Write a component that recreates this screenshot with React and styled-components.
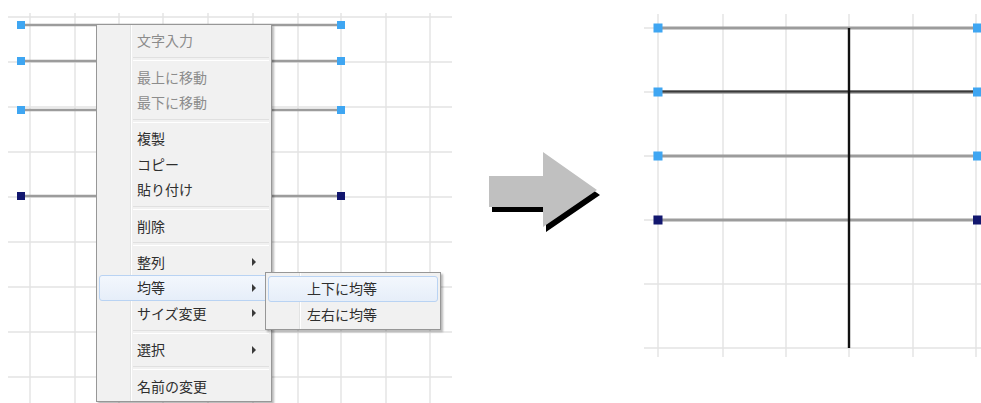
import React from "react";
import styled, { createGlobalStyle } from "styled-components";

const Global = createGlobalStyle`
  html, body { margin: 0; padding: 0; background: #ffffff; }
  body { font-family: "Noto Sans CJK JP", "Noto Sans", sans-serif; }
  * { box-sizing: border-box; }
`;

const Page = styled.div`
  width: 981px;
  height: 403px;
  display: flex;
  overflow: hidden;
  background: #ffffff;
`;

const LeftPane = styled.div`
  position: relative;
  width: 460px;
  height: 403px;
  flex: none;
`;

const MiddlePane = styled.div`
  width: 170px;
  height: 403px;
  flex: none;
`;

const RightPane = styled.div`
  flex: 1;
  height: 403px;
`;

const Canvas = styled.svg`
  display: block;
  width: 100%;
  height: 100%;
`;

const Menu = styled.div`
  position: absolute;
  left: ${(p) => p.$left}px;
  top: ${(p) => p.$top}px;
  width: 176px;
  padding: 3px 2px 2px;
  border: 1px solid #979797;
  background:
    linear-gradient(to right, transparent 33px, #e2e3e3 33px, #e2e3e3 34px, #ffffff 34px, #ffffff 35px, transparent 35px),
    #f1f1f1;
  box-shadow: 2px 2px 2px rgba(0, 0, 0, 0.28);
  display: flex;
  flex-direction: column;
`;

const Item = styled.div`
  position: relative;
  height: 25.5px;
  display: flex;
  align-items: center;
  justify-content: space-between;
  padding: 0 12px 0 ${(p) => p.$indent}px;
  font-size: 14px;
  line-height: 1;
  color: ${(p) => (p.$disabled ? "#8c8c8c" : "#2e2e2e")};
  border: 1px solid ${(p) => (p.$active ? "#b9d3f3" : "transparent")};
  border-radius: 3px;
  background: ${(p) =>
    p.$active ? "linear-gradient(#f3f7fd, #e6eef9)" : "transparent"};
`;

const Label = styled.span`
  display: block;
  margin-top: -1px;
`;

const SubArrow = styled.span`
  width: 0;
  height: 0;
  border-left: 4px solid #3a3a3a;
  border-top: 4px solid transparent;
  border-bottom: 4px solid transparent;
`;

const Separator = styled.div`
  height: 10.8px;
  display: flex;
  align-items: center;
  padding-left: 34px;
  &::after {
    content: "";
    display: block;
    width: 100%;
    height: 2px;
    border-top: 1px solid #e0e0e0;
    border-bottom: 1px solid #ffffff;
  }
`;

const leftV = [30, 75, 119, 163, 208, 253, 298, 341, 386, 430];
const leftH = [17, 62, 107, 152, 197, 242, 287, 332, 377];
const leftLines = [
  { y: 25, c: "#3fa6f2" },
  { y: 61, c: "#3fa6f2" },
  { y: 110, c: "#3fa6f2" },
  { y: 196, c: "#12176f" },
];

const rightV = [28, 93, 156, 219, 283, 346];
const rightH = [28, 92, 156, 220, 284, 348];
const rightLines = [
  { y: 28, c: "#3fa6f2" },
  { y: 92, c: "#3fa6f2", bold: true },
  { y: 156, c: "#3fa6f2" },
  { y: 220, c: "#12176f" },
];

const menuItems = [
  { label: "文字入力", disabled: true },
  { sep: true },
  { label: "最上に移動", disabled: true },
  { label: "最下に移動", disabled: true },
  { sep: true },
  { label: "複製" },
  { label: "コピー" },
  { label: "貼り付け" },
  { sep: true },
  { label: "削除" },
  { sep: true },
  { label: "整列", sub: true },
  { label: "均等", sub: true, active: true },
  { label: "サイズ変更", sub: true },
  { sep: true },
  { label: "選択", sub: true },
  { sep: true },
  { label: "名前の変更" },
];

const subItems = [
  { label: "上下に均等", active: true },
  { label: "左右に均等" },
];

function Handle({ x, y, c, s }) {
  return <rect x={x - s / 2} y={y - s / 2} width={s} height={s} fill={c} />;
}

function LeftDiagram() {
  return (
    <Canvas viewBox="0 0 460 403">
      {leftV.map((x) => (
        <line key={"v" + x} x1={x} y1={13} x2={x} y2={403} stroke="#e3e3e3" strokeWidth="1.4" />
      ))}
      {leftH.map((y) => (
        <line key={"h" + y} x1={8} y1={y} x2={452} y2={y} stroke="#e3e3e3" strokeWidth="1.4" />
      ))}
      {leftLines.map((l) => (
        <g key={l.y}>
          <line x1={21} y1={l.y} x2={341} y2={l.y} stroke="#9c9c9c" strokeWidth="2.6" />
          <Handle x={21} y={l.y} c={l.c} s={8} />
          <Handle x={341} y={l.y} c={l.c} s={8} />
        </g>
      ))}
    </Canvas>
  );
}

function ArrowDrawing() {
  const pts = [
    [29, 176],
    [83, 176],
    [83, 152],
    [137, 190],
    [83, 227],
    [83, 207],
    [29, 207],
  ];
  const toStr = (dx, dy) => pts.map(([x, y]) => `${x + dx},${y + dy}`).join(" ");
  return (
    <Canvas viewBox="0 0 170 403">
      <polygon points={toStr(3, 5)} fill="#000000" />
      <polygon points={toStr(0, 0)} fill="#c0c0c0" />
    </Canvas>
  );
}

function RightDiagram() {
  return (
    <Canvas viewBox="0 0 351 403">
      {rightV.map((x) => (
        <line key={"v" + x} x1={x} y1={14} x2={x} y2={357} stroke="#e3e3e3" strokeWidth="1.4" />
      ))}
      {rightH.map((y) => (
        <line key={"h" + y} x1={14} y1={y} x2={351} y2={y} stroke="#e3e3e3" strokeWidth="1.4" />
      ))}
      {rightLines.map((l) => (
        <g key={l.y}>
          <line x1={28} y1={l.y} x2={351} y2={l.y} stroke="#9c9c9c" strokeWidth={l.bold ? 3.6 : 2.8} />
          {l.bold && (
            <line x1={28} y1={l.y - 0.6} x2={351} y2={l.y - 0.6} stroke="#3a3a3a" strokeWidth="2" />
          )}
        </g>
      ))}
      <line x1={219} y1={28} x2={219} y2={348} stroke="#111111" strokeWidth="2.4" />
      {rightLines.map((l) => (
        <g key={"hd" + l.y}>
          <Handle x={28} y={l.y} c={l.c} s={9} />
          <Handle x={347.5} y={l.y} c={l.c} s={9} />
        </g>
      ))}
    </Canvas>
  );
}

function ContextMenu({ left, top, items, indent }) {
  return (
    <Menu $left={left} $top={top}>
      {items.map((it, i) =>
        it.sep ? (
          <Separator key={i} />
        ) : (
          <Item key={i} $disabled={it.disabled} $active={it.active} $indent={indent}>
            <Label>{it.label}</Label>
            {it.sub && <SubArrow />}
          </Item>
        )
      )}
    </Menu>
  );
}

export default function App() {
  return (
    <>
      <Global />
      <Page>
        <LeftPane>
          <LeftDiagram />
          <ContextMenu left={96} top={24} items={menuItems} indent={37} />
          <ContextMenu left={265} top={272} items={subItems} indent={38} />
        </LeftPane>
        <MiddlePane>
          <ArrowDrawing />
        </MiddlePane>
        <RightPane>
          <RightDiagram />
        </RightPane>
      </Page>
    </>
  );
}
